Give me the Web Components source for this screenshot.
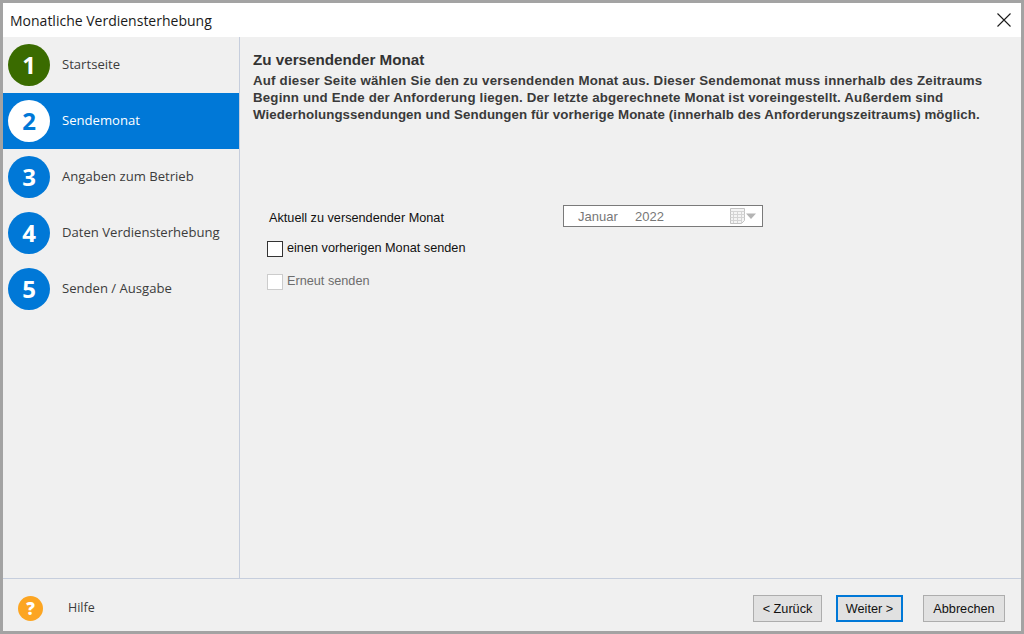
<!DOCTYPE html>
<html>
<head>
<meta charset="utf-8">
<title>Monatliche Verdiensterhebung</title>
<style>
  html, body { margin: 0; height: 100%; }
  body { background: #a3a3a3; font-family: "Liberation Sans", Arial, sans-serif; overflow: hidden; }
</style>
</head>
<body>
<wizard-window title-text="Monatliche Verdiensterhebung">
  <wizard-step slot="steps" num="1" state="done">Startseite</wizard-step>
  <wizard-step slot="steps" num="2" state="active">Sendemonat</wizard-step>
  <wizard-step slot="steps" num="3">Angaben zum Betrieb</wizard-step>
  <wizard-step slot="steps" num="4">Daten Verdiensterhebung</wizard-step>
  <wizard-step slot="steps" num="5">Senden / Ausgabe</wizard-step>

  <month-page></month-page>

  <help-link slot="help">Hilfe</help-link>
  <wizard-button slot="buttons" style="width:69px">&lt; Zurück</wizard-button>
  <wizard-button slot="buttons" style="width:67px;margin-right:6px" primary>Weiter &gt;</wizard-button>
  <wizard-button slot="buttons" style="width:82px">Abbrechen</wizard-button>
</wizard-window>

<script>
class WizardWindow extends HTMLElement {
  constructor() {
    super();
    this.attachShadow({ mode: "open" });
  }

  connectedCallback() {
    this.shadowRoot.innerHTML = `
      <style>
        :host {
          display: flex;
          flex-direction: column;
          height: 628px;
          margin: 3px;
          background: #f0f0f0;
        }
        #title {
          height: 34px;
          flex: none;
          background: #fff;
          display: flex;
          align-items: center;
          justify-content: space-between;
          padding: 0 10px 0 7px;
          font: 14px "Open Sans", sans-serif;
          color: #1a1a1a;
        }
        #title svg { display: block; }
        #main { flex: 1; display: flex; min-height: 0; }
        #steps {
          width: 236px;
          flex: none;
          border-right: 1px solid #c6cedd;
        }
        #content { flex: 1; min-width: 0; }
        #footer {
          box-sizing: border-box;
          height: 53px;
          flex: none;
          border-top: 1px solid #c6cedd;
          display: flex;
          align-items: center;
          justify-content: space-between;
          padding: 7px 16px 0 15px;
        }
        #buttons { display: flex; gap: 14px; }
      </style>
      <div id="title">
        <span>${this.getAttribute("title-text")}</span>
        <svg width="14" height="14" viewBox="0 0 14 14" fill="none" stroke="#1a1a1a" stroke-width="1.1">
          <path d="M0.5 0.5L13.5 13.5M13.5 0.5L0.5 13.5"/>
        </svg>
      </div>
      <div id="main">
        <div id="steps"><slot name="steps"></slot></div>
        <div id="content"><slot></slot></div>
      </div>
      <div id="footer">
        <slot name="help"></slot>
        <div id="buttons"><slot name="buttons"></slot></div>
      </div>
    `;
  }
}

class WizardStep extends HTMLElement {
  constructor() {
    super();
    this.attachShadow({ mode: "open" });
  }

  connectedCallback() {
    this.shadowRoot.innerHTML = `
      <style>
        :host {
          display: flex;
          align-items: center;
          gap: 12px;
          height: 56px;
          padding-left: 5px;
          font: 13.1px "Open Sans", sans-serif;
          color: #3c3c3c;
        }
        :host([state="active"]) { background: #0078d7; color: #fff; }
        #dot {
          box-sizing: border-box;
          width: 42px;
          height: 42px;
          padding-bottom: 2px;
          border-radius: 50%;
          background: #0078d7;
          color: #fff;
          display: flex;
          align-items: center;
          justify-content: center;
          font-size: 24px;
          font-weight: 700;
          flex: none;
        }
        :host([state="done"]) #dot { background: #3a6b00; }
        :host([state="active"]) #dot { background: #fff; color: #0078d7; }
        #label { padding-bottom: 2px; }
      </style>
      <div id="dot">${this.getAttribute("num")}</div>
      <div id="label"><slot></slot></div>
    `;
  }
}

class MonthPage extends HTMLElement {
  constructor() {
    super();
    this.attachShadow({ mode: "open" });
  }

  connectedCallback() {
    this.shadowRoot.innerHTML = `
      <style>
        :host {
          display: block;
          padding: 14px 13px 0 13px;
          color: #333;
        }
        h1 {
          margin: 0;
          font: bold 15.2px/17px "Liberation Sans", sans-serif;
        }
        p {
          margin: 4px 0 0;
          font: bold 13.3px/17px "Liberation Sans", sans-serif;
          color: #3a3a3a;
        }
        p span { display: block; white-space: nowrap; }
        #form {
          margin-top: 82px;
          padding-left: 14px;
          font-size: 12.7px;
          color: #111;
        }
        #month-row {
          display: flex;
          align-items: center;
          justify-content: space-between;
          width: 496px;
          height: 22px;
        }
        #month-row span { padding: 3px 0 0 2px; }
        #picker {
          box-sizing: border-box;
          width: 200px;
          height: 22px;
          background: #fff;
          border: 1px solid #7a7a7a;
          display: flex;
          align-items: center;
          padding-left: 14px;
          font-size: 13px;
          color: #777;
        }
        #picker b { font-weight: 400; width: 57px; }
        #picker i { font-style: normal; flex: 1; }
        #picker svg { display: block; }
        check-row { margin-top: 14px; }
        check-row[disabled] { margin-top: 17px; }
      </style>
      <h1>Zu versendender Monat</h1>
      <p>
        <span style="letter-spacing:.19px">Auf dieser Seite wählen Sie den zu versendenden Monat aus. Dieser Sendemonat muss innerhalb des Zeitraums</span>
        <span style="letter-spacing:.17px">Beginn und Ende der Anforderung liegen. Der letzte abgerechnete Monat ist voreingestellt. Außerdem sind</span>
        <span style="letter-spacing:.09px">Wiederholungssendungen und Sendungen für vorherige Monate (innerhalb des Anforderungszeitraums) möglich.</span>
      </p>
      <div id="form">
        <div id="month-row">
          <span>Aktuell zu versendender Monat</span>
          <div id="picker">
            <b>Januar</b><i>2022</i>
            <svg width="32" height="16" viewBox="0 0 32 16" fill="none">
              <path d="M0.5 0.5H14.5V12.5L11.5 15.5H0.5Z" fill="#f4f4f4" stroke="#c4c4c4"/>
              <path d="M0.5 3.5H14.5M0.5 6.5H14.5M0.5 9.5H14.5M0.5 12.5H12M3.5 3.5V15M7.5 3.5V15M11.5 3.5V15" stroke="#d4d4d4"/>
              <path d="M16 5.5H26L21 11Z" fill="#b4b4b4"/>
            </svg>
          </div>
        </div>
        <check-row>einen vorherigen Monat senden</check-row>
        <check-row disabled>Erneut senden</check-row>
      </div>
    `;
  }
}

class CheckRow extends HTMLElement {
  constructor() {
    super();
    this.attachShadow({ mode: "open" });
  }

  connectedCallback() {
    this.shadowRoot.innerHTML = `
      <style>
        :host {
          display: flex;
          align-items: center;
          gap: 4px;
          height: 16px;
          font-size: 12.7px;
          color: #111;
        }
        :host([disabled]) { color: #6d6d6d; }
        #box {
          box-sizing: border-box;
          width: 16px;
          height: 16px;
          background: #fff;
          border: 1px solid #333;
          flex: none;
        }
        :host([disabled]) #box { border-color: #ccc; }
        #label { padding-bottom: 2px; }
      </style>
      <div id="box"></div>
      <div id="label"><slot></slot></div>
    `;
  }
}

class HelpLink extends HTMLElement {
  constructor() {
    super();
    this.attachShadow({ mode: "open" });
  }

  connectedCallback() {
    this.shadowRoot.innerHTML = `
      <style>
        :host {
          display: flex;
          align-items: center;
          gap: 25px;
          font: 12.5px "Open Sans", sans-serif;
          color: #3c3c3c;
        }
        #icon {
          width: 25px;
          height: 25px;
          border-radius: 50%;
          background: #fca522;
          color: #fff;
          display: flex;
          align-items: center;
          justify-content: center;
          font: 800 17px "Open Sans", sans-serif;
        }
        #label { padding-bottom: 3px; }
      </style>
      <div id="icon">?</div>
      <div id="label"><slot></slot></div>
    `;
  }
}

class WizardButton extends HTMLElement {
  constructor() {
    super();
    this.attachShadow({ mode: "open" });
  }

  connectedCallback() {
    this.shadowRoot.innerHTML = `
      <style>
        :host {
          box-sizing: border-box;
          display: flex;
          align-items: center;
          justify-content: center;
          height: 27px;
          background: #e1e1e1;
          border: 1px solid #adadad;
          font-size: 12.7px;
          color: #111;
        }
        :host([primary]) { border: 2px solid #0078d7; }
      </style>
      <slot></slot>
    `;
  }
}

customElements.define("wizard-window", WizardWindow);
customElements.define("wizard-step", WizardStep);
customElements.define("month-page", MonthPage);
customElements.define("check-row", CheckRow);
customElements.define("help-link", HelpLink);
customElements.define("wizard-button", WizardButton);
</script>
</body>
</html>
